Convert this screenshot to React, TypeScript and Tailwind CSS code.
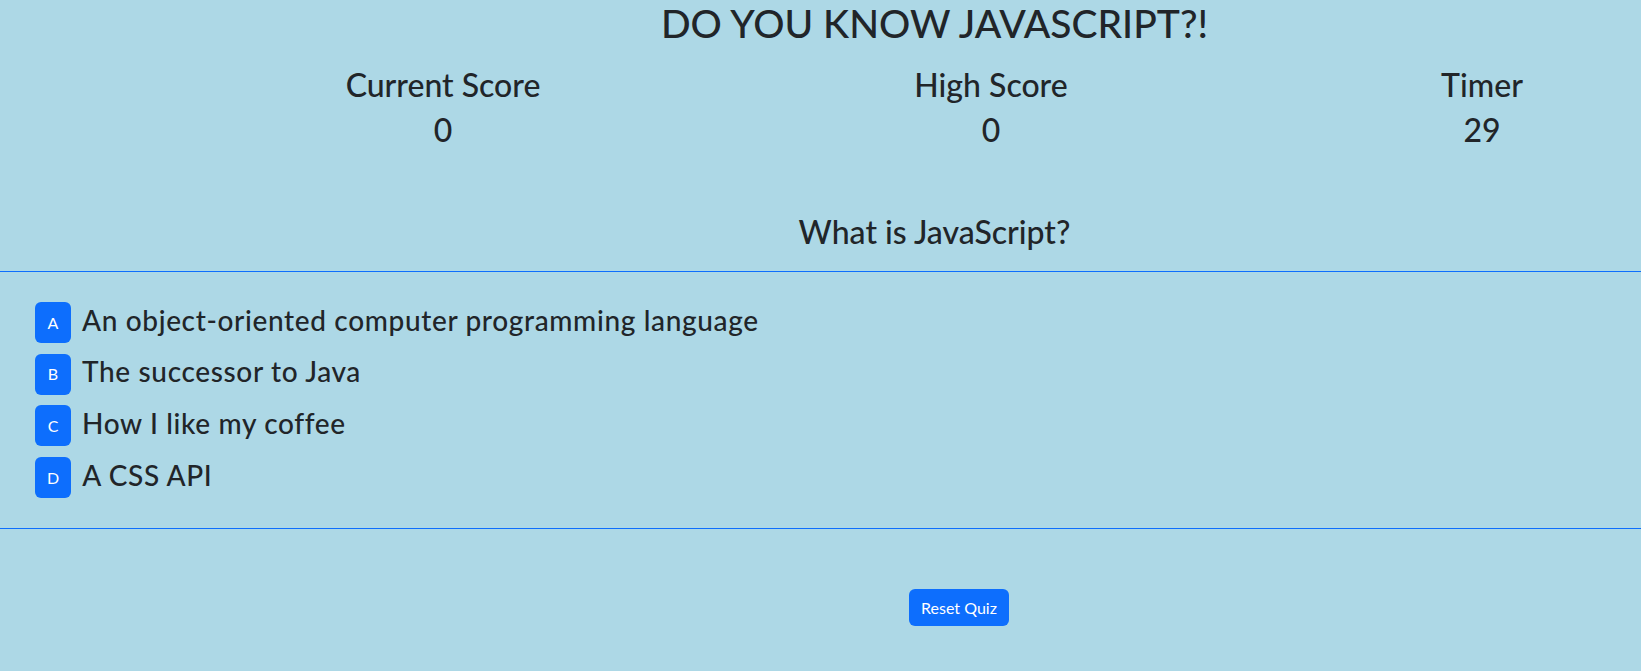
import React from 'react';

const answers = [
  { key: 'A', text: 'An object-oriented computer programming language' },
  { key: 'B', text: 'The successor to Java' },
  { key: 'C', text: 'How I like my coffee' },
  { key: 'D', text: 'A CSS API' },
];

const stats = [
  { label: 'Current Score', value: '0', margin: 'ml-[293px]' },
  { label: 'High Score', value: '0', margin: 'ml-[248px]' },
  { label: 'Timer', value: '29', margin: 'ml-[191px]' },
];

export default function App() {
  return (
    <div
      className="min-h-screen w-full overflow-hidden bg-[#add8e6] text-[#212529]"
      style={{ fontFamily: '"Segoe UI", Lato, "Noto Sans", sans-serif' }}
    >
      {/* Title */}
      <h1 className="pl-[228px] text-center text-[39px] leading-[47px] font-medium">
        DO YOU KNOW JAVASCRIPT?!
      </h1>

      {/* Scoreboard */}
      <div className="mt-[19px] flex">
        {stats.map((s) => (
          <div key={s.label} className={`${s.margin} w-[300px] shrink-0 text-center`}>
            <h2 className="text-[32px] leading-[38px] font-medium">{s.label}</h2>
            <h2 className="mt-[7px] text-[32px] leading-[38px] font-medium">{s.value}</h2>
          </div>
        ))}
      </div>

      {/* Question */}
      <h2 className="mt-[64px] pl-[228px] text-center text-[32px] leading-[38px] font-medium">
        What is JavaScript?
      </h2>

      {/* Answers */}
      <div className="mt-[20px] border-y border-[#0d6efd] pt-[30px] pb-[30px] pl-[35px]">
        <ul className="flex flex-col gap-[10.7px]">
          {answers.map((a) => (
            <li key={a.key} className="flex items-center gap-[11px]">
              <button className="flex h-[41px] min-w-[36px] items-center justify-center rounded-[6px] bg-[#0d6efd] px-3 text-[16px] text-white">
                {a.key}
              </button>
              <span className="pb-[6px] text-[28px] leading-[34px] tracking-[0.65px] font-medium">
                {a.text}
              </span>
            </li>
          ))}
        </ul>
      </div>

      {/* Reset */}
      <div className="mt-[60px] pl-[909px]">
        <button className="h-[37px] w-[100px] rounded-[6px] bg-[#0d6efd] text-[16px] text-white">
          Reset Quiz
        </button>
      </div>
    </div>
  );
}
